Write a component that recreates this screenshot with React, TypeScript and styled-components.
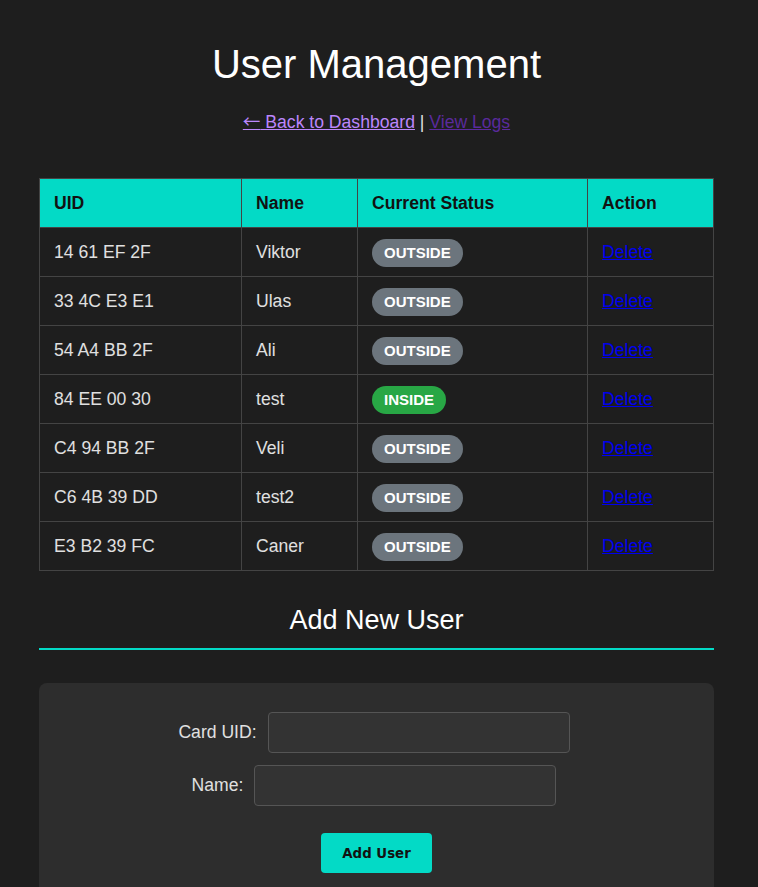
import React from "react";
import styled, { createGlobalStyle } from "styled-components";

const Global = createGlobalStyle`
  html, body { margin: 0; padding: 0; background: #1e1e1e; }
  body {
    font-family: "Liberation Sans", Arial, sans-serif;
    color: #e0e0e0;
  }
`;

const Page = styled.div`
  padding: 41px 44px 0 39px;
  box-sizing: border-box;
  width: 758px;
`;

const Title = styled.h1`
  margin: 0;
  font-size: 40px;
  font-weight: normal;
  line-height: 46px;
  color: #ffffff;
  text-align: center;
`;

const NavLine = styled.div`
  margin-top: 25px;
  height: 20px;
  text-align: center;
  font-size: 17.6px;
  line-height: 20px;
  color: #e0e0e0;
`;

const NavLink = styled.a<{ $visited?: boolean }>`
  color: ${(p) => (p.$visited ? "#5a2a9c" : "#bb86fc")};
  text-decoration: underline;
`;

const Arrow = styled.span`
  font-family: "Noto Sans CJK SC", "Liberation Sans", sans-serif;
  line-height: 0;
`;

const Table = styled.table`
  margin-top: 46px;
  width: 675px;
  table-layout: fixed;
  border-collapse: collapse;
  font-size: 17.6px;
`;

const Col = styled.col<{ $w: number }>`
  width: ${(p) => p.$w}px;
`;

const Th = styled.th`
  background: #03dac6;
  color: #121212;
  font-weight: bold;
  text-align: left;
  padding: 14px 14px;
  line-height: 20px;
  border: 1px solid #444;
`;

const Td = styled.td`
  padding: 14px 14px;
  line-height: 20px;
  height: 20px;
  border: 1px solid #444;
  color: #e0e0e0;
  text-align: left;
  vertical-align: middle;
`;

const Badge = styled.span<{ $inside?: boolean }>`
  display: inline-block;
  vertical-align: middle;
  background: ${(p) => (p.$inside ? "#28a745" : "#6c757d")};
  color: #ffffff;
  font-weight: bold;
  font-size: 15px;
  line-height: 18px;
  padding: 5px 12px;
  border-radius: 14px;
  margin: -7px 0;
`;

const DeleteLink = styled.a`
  color: #0000ee;
  text-decoration: underline;
`;

const SectionTitle = styled.h2`
  margin: 34px 0 0;
  font-size: 27px;
  font-weight: normal;
  line-height: 31px;
  color: #ffffff;
  text-align: center;
  padding-bottom: 12px;
  border-bottom: 2px solid #03dac6;
`;

const Card = styled.div`
  margin-top: 33px;
  background: #2d2d2d;
  border-radius: 8px;
  padding: 29px 20px 30px;
  display: flex;
  flex-direction: column;
  align-items: center;
`;

const FieldRow = styled.div`
  display: flex;
  align-items: center;
  justify-content: center;
  & + & {
    margin-top: 12px;
  }
`;

const Label = styled.label`
  font-size: 17.6px;
  color: #e0e0e0;
  margin-right: 6px;
`;

const Input = styled.input`
  width: 302px;
  height: 41px;
  box-sizing: border-box;
  margin: 0 5px;
  background: #333333;
  border: 1px solid #555555;
  border-radius: 4px;
  color: #e0e0e0;
  padding: 10px;
  font-size: 16px;
`;

const Button = styled.button`
  margin-top: 27px;
  width: 111px;
  height: 40px;
  background: #03dac6;
  color: #121212;
  border: none;
  border-radius: 4px;
  font-family: "DejaVu Sans", sans-serif;
  font-weight: bold;
  font-size: 13.33px;
  cursor: pointer;
`;

const users = [
  { uid: "14 61 EF 2F", name: "Viktor", inside: false },
  { uid: "33 4C E3 E1", name: "Ulas", inside: false },
  { uid: "54 A4 BB 2F", name: "Ali", inside: false },
  { uid: "84 EE 00 30", name: "test", inside: true },
  { uid: "C4 94 BB 2F", name: "Veli", inside: false },
  { uid: "C6 4B 39 DD", name: "test2", inside: false },
  { uid: "E3 B2 39 FC", name: "Caner", inside: false },
];

export default function App() {
  return (
    <>
      <Global />
      <Page>
        <Title>User Management</Title>
        <NavLine>
          <NavLink href="#">
            <Arrow>←</Arrow> Back to Dashboard
          </NavLink>{" "}
          |{" "}
          <NavLink href="#" $visited>
            View Logs
          </NavLink>
        </NavLine>
        <Table>
          <colgroup>
            <Col $w={202} />
            <Col $w={116} />
            <Col $w={230} />
            <Col $w={126} />
          </colgroup>
          <thead>
            <tr>
              <Th>UID</Th>
              <Th>Name</Th>
              <Th>Current Status</Th>
              <Th>Action</Th>
            </tr>
          </thead>
          <tbody>
            {users.map((u) => (
              <tr key={u.uid}>
                <Td>{u.uid}</Td>
                <Td>{u.name}</Td>
                <Td>
                  <Badge $inside={u.inside}>{u.inside ? "INSIDE" : "OUTSIDE"}</Badge>
                </Td>
                <Td>
                  <DeleteLink href="#">Delete</DeleteLink>
                </Td>
              </tr>
            ))}
          </tbody>
        </Table>
        <SectionTitle>Add New User</SectionTitle>
        <Card>
          <FieldRow>
            <Label>Card UID:</Label>
            <Input type="text" />
          </FieldRow>
          <FieldRow>
            <Label>Name:</Label>
            <Input type="text" />
          </FieldRow>
          <Button>Add User</Button>
        </Card>
      </Page>
    </>
  );
}
